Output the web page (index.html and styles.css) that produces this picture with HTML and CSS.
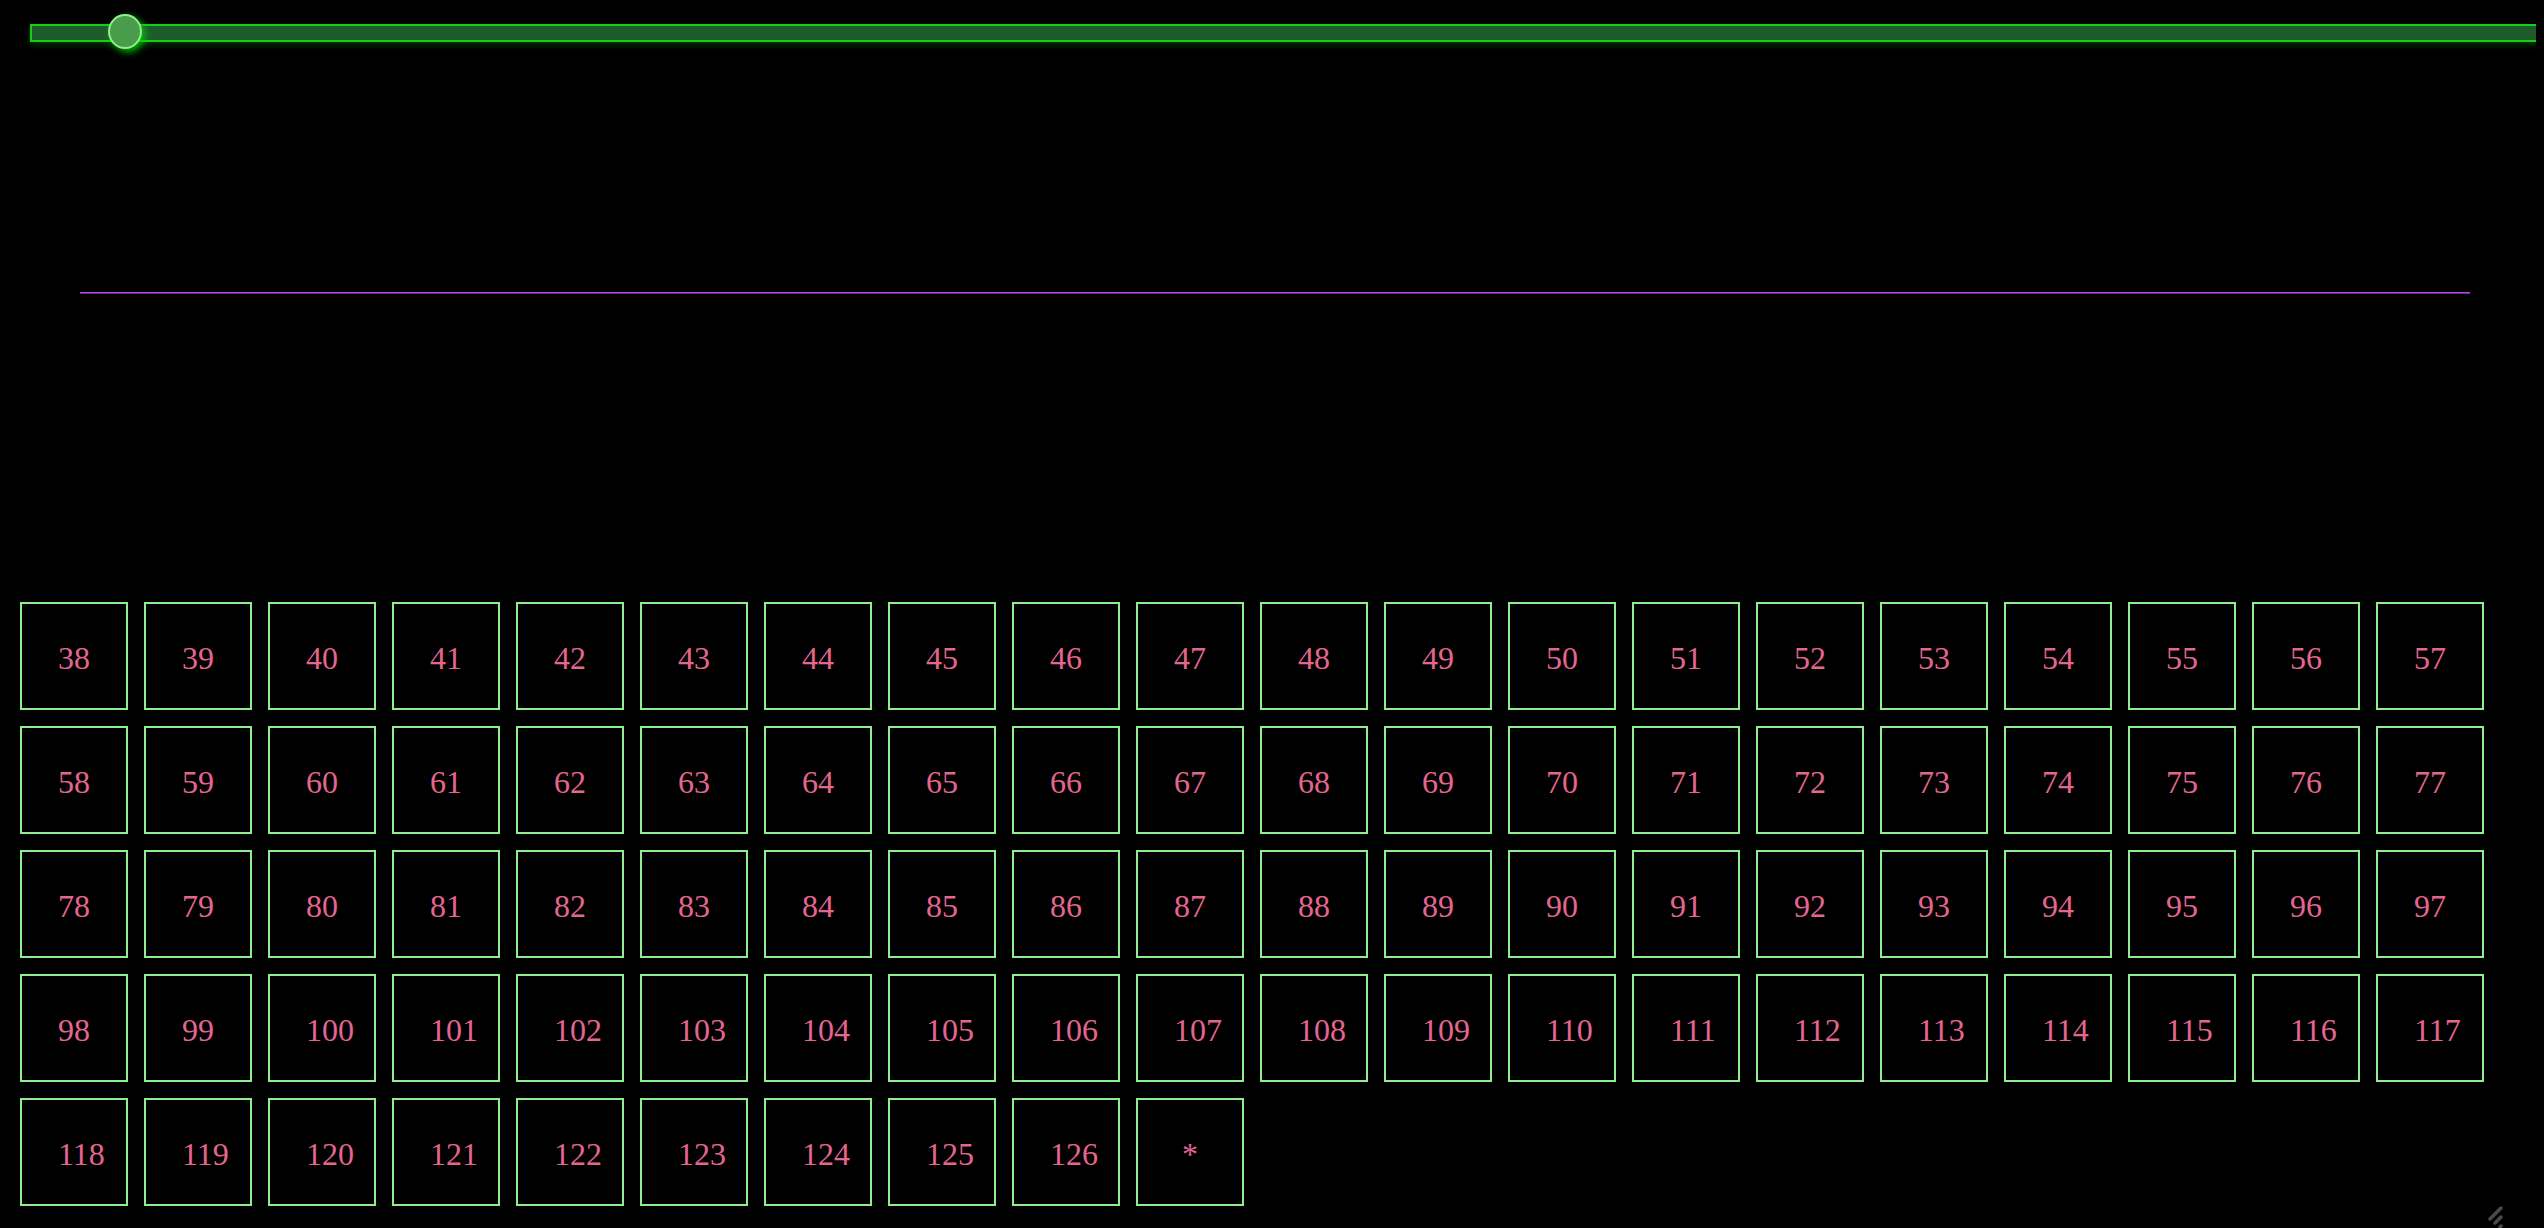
FILE: index.html
```html
<!DOCTYPE html>
<html>
<head>
<meta charset="utf-8">
<link rel="stylesheet" href="styles.css">
</head>
<body>
<div class="slider">
  <div class="track"><div class="thumb"></div></div>
</div>
<div class="rule"></div>
<div class="grid">
  <div class="cell">38</div><div class="cell">39</div><div class="cell">40</div><div class="cell">41</div><div class="cell">42</div><div class="cell">43</div><div class="cell">44</div><div class="cell">45</div><div class="cell">46</div><div class="cell">47</div>
  <div class="cell">48</div><div class="cell">49</div><div class="cell">50</div><div class="cell">51</div><div class="cell">52</div><div class="cell">53</div><div class="cell">54</div><div class="cell">55</div><div class="cell">56</div><div class="cell">57</div>
  <div class="cell">58</div><div class="cell">59</div><div class="cell">60</div><div class="cell">61</div><div class="cell">62</div><div class="cell">63</div><div class="cell">64</div><div class="cell">65</div><div class="cell">66</div><div class="cell">67</div>
  <div class="cell">68</div><div class="cell">69</div><div class="cell">70</div><div class="cell">71</div><div class="cell">72</div><div class="cell">73</div><div class="cell">74</div><div class="cell">75</div><div class="cell">76</div><div class="cell">77</div>
  <div class="cell">78</div><div class="cell">79</div><div class="cell">80</div><div class="cell">81</div><div class="cell">82</div><div class="cell">83</div><div class="cell">84</div><div class="cell">85</div><div class="cell">86</div><div class="cell">87</div>
  <div class="cell">88</div><div class="cell">89</div><div class="cell">90</div><div class="cell">91</div><div class="cell">92</div><div class="cell">93</div><div class="cell">94</div><div class="cell">95</div><div class="cell">96</div><div class="cell">97</div>
  <div class="cell">98</div><div class="cell">99</div><div class="cell">100</div><div class="cell">101</div><div class="cell">102</div><div class="cell">103</div><div class="cell">104</div><div class="cell">105</div><div class="cell">106</div><div class="cell">107</div>
  <div class="cell">108</div><div class="cell">109</div><div class="cell">110</div><div class="cell">111</div><div class="cell">112</div><div class="cell">113</div><div class="cell">114</div><div class="cell">115</div><div class="cell">116</div><div class="cell">117</div>
  <div class="cell">118</div><div class="cell">119</div><div class="cell">120</div><div class="cell">121</div><div class="cell">122</div><div class="cell">123</div><div class="cell">124</div><div class="cell">125</div><div class="cell">126</div><div class="cell">*</div>
</div>
<svg class="grip" width="24" height="24" viewBox="0 0 24 24">
  <line x1="16" y1="4" x2="5" y2="15" stroke="#4a4a4a" stroke-width="3.5" stroke-linecap="round"/>
  <line x1="16" y1="13" x2="10" y2="19" stroke="#4a4a4a" stroke-width="3.5" stroke-linecap="round"/>
  <line x1="16" y1="22" x2="15" y2="23" stroke="#4a4a4a" stroke-width="3.5" stroke-linecap="round"/>
</svg>
</body>
</html>
```
FILE: styles.css
```css
html {
  overflow: hidden;
  background: #000;
}
body {
  margin: 8px;
  background: #000;
  font-family: "Liberation Serif", "Times New Roman", serif;
}
.slider {
  margin: 16px -8px 0 22px;
}
.track {
  position: relative;
  height: 14px;
  background: #1f5a2a;
  border: 2px solid #14d014;
  border-right: none;
  box-shadow: 0 3px 6px rgba(0, 160, 0, 0.35);
}
.thumb {
  position: absolute;
  left: 76px;
  top: -12px;
  width: 30px;
  height: 31px;
  border-radius: 50%;
  background: #489c4a;
  border: 2px solid #90ee90;
  box-shadow: 3px 3px 7px rgba(0, 210, 0, 0.85);
}
.rule {
  margin: 250px 0 0 72px;
  width: 2390px;
  border-top: 1px solid #bf48e0;
  border-bottom: 1px solid #6d2a85;
}
.grid {
  margin-top: 308px;
  padding-left: 12px;
  display: flex;
  flex-wrap: wrap;
  gap: 16px;
}
.cell {
  width: 32px;
  height: 32px;
  padding: 36px;
  border: 2px solid #90ee90;
  color: #e4668e;
  font-size: 32px;
  line-height: normal;
  text-align: center;
  white-space: nowrap;
}
.grip {
  position: absolute;
  left: 2485px;
  top: 1204px;
}
```
